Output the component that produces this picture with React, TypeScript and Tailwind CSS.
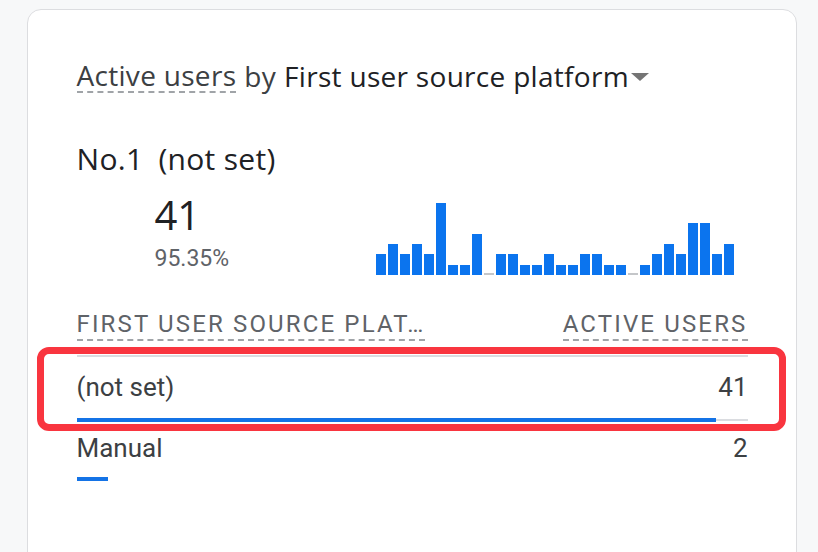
import React from "react";

const bars = [2, 3, 2, 3, 2, 7, 1, 1, 4, 0, 2, 2, 1, 1, 2, 1, 1, 2, 2, 1, 1, 0, 1, 2, 3, 2, 5, 5, 2, 3];

const rows = [
  { name: "(not set)", users: 41, track: true },
  { name: "Manual", users: 2, track: false },
];

const total = 43;

export default function App() {
  return (
    <div className="relative h-[552px] w-[818px] overflow-hidden bg-[#f7f8f9] pt-[9px] pl-[27px] font-['Roboto',sans-serif]">
      <div className="h-[600px] w-[770px] rounded-[14px] border-[1.5px] border-[#dcdde0] bg-white px-[48.5px] pt-[49px]">
        {/* card title */}
        <div className="flex items-center font-['Open_Sans',sans-serif] text-[28px] leading-[32px] tracking-[0.3px] text-[#202124]">
          <span className="border-b-2 border-dashed border-[#a0a4a8] text-[#3c4043]">Active users</span>
          <span className="ml-[8px] text-[#3c4043]">by</span>
          <span className="ml-[8px]">First user source platform</span>
          <svg width="20" height="10" viewBox="0 0 20 10" className="ml-[1px] mt-[2px]">
            <polygon points="1,1 19,1 10,9" fill="#757575" />
          </svg>
        </div>

        <div className="mt-[48px] flex font-['Open_Sans',sans-serif] text-[30px] font-medium leading-[36px] tracking-[0.3px] text-[#202124]">
          <span>No.1</span>
          <span className="ml-[15px]">(not set)</span>
        </div>

        <div className="mt-[16px] flex items-start">
          <div className="ml-[78px] flex flex-col">
            <span className="font-['Open_Sans',sans-serif] text-[40px] leading-[44px] text-[#202124]">41</span>
            <span className="mt-[9px] text-[23px] leading-[26px] text-[#5f6368]">95.35%</span>
          </div>
          <div className="mt-[10px] ml-auto mr-[14px] flex h-[72px] items-end gap-[2px]">
            {bars.map((v, i) => (
              <div
                key={i}
                className={v === 0 ? "w-[10px] bg-[#c4c6c9]" : "w-[10px] bg-[#0b74ee]"}
                style={{ height: v === 0 ? 2 : Math.round(v * 10.3) }}
              />
            ))}
          </div>
        </div>

        {/* table */}
        <div className="mt-[35px] flex justify-between text-[24px] uppercase leading-[28px] tracking-[2.15px] text-[#5f6368]">
          <span className="border-b-2 border-dashed border-[#a0a4a8] pb-[1px]">First user source plat…</span>
          <span className="border-b-2 border-dashed border-[#a0a4a8] pb-[1px]">Active users</span>
        </div>
        <div className="mt-[14px] h-[2px] bg-[#dadce0]" />

        {rows.map((r, i) => (
          <div key={r.name} className={i === 0 ? "mt-[14px]" : "mt-[10px]"}>
            <div className="flex justify-between text-[26px] leading-[32px] text-[#3c4043]">
              <span>{r.name}</span>
              <span>{r.users}</span>
            </div>
            <div className={i === 0 ? "mt-[15px] flex items-center" : "mt-[13px] flex items-center"}>
              <div className="h-[4px] bg-[#1473e6]" style={{ width: `${(r.users / total) * 100}%` }} />
              {r.track && <div className="h-[2px] flex-1 bg-[#dadce0]" />}
            </div>
          </div>
        ))}
      </div>

      {/* highlight annotation */}
      <div className="absolute left-[37px] top-[347px] h-[84px] w-[749px] rounded-[12px] border-[7px] border-[#f9353f]" />
    </div>
  );
}
